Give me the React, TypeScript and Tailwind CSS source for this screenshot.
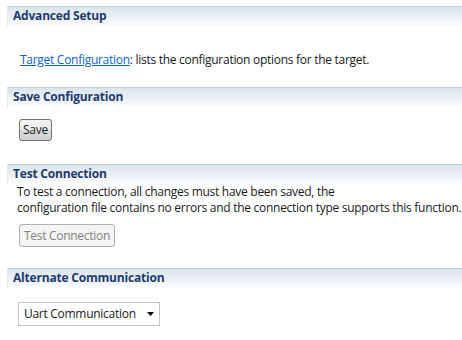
import { ReactNode } from 'react';

function SectionHeader({ children }: { children: ReactNode }) {
  return (
    <div className="ml-[7px] h-[20px] border-t border-l border-t-[#c2cfdd] border-l-[#e3e9f0] bg-[linear-gradient(to_bottom,#dbe4ee,#fbfcfd)] pl-[5px] text-[12px] font-bold leading-[18px] tracking-[-0.2px] text-[#1d3b6c]">
      {children}
    </div>
  );
}

export default function App() {
  return (
    <div className="flex h-[340px] w-[462px] flex-col bg-white pt-[6px] font-['Segoe_UI','Open_Sans',sans-serif] text-[12px] tracking-[-0.28px] text-[#1a1a1a]">
      <SectionHeader>Advanced Setup</SectionHeader>
      <p className="mt-[26px] pl-[20px] leading-[15px]">
        <a className="text-[#0b64c8] underline" href="#">Target Configuration</a>: lists the configuration options for the target.
      </p>

      <div className="mt-[20px]">
        <SectionHeader>Save Configuration</SectionHeader>
      </div>
      <div className="mt-[12px] pl-[19px]">
        <button className="h-[22px] w-[33px] rounded-[3px] border border-[#707070] bg-[linear-gradient(to_bottom,#f2f2f2_0%,#ebebeb_50%,#dddddd_51%,#cfcfcf_100%)] text-[12px] leading-[18px]">
          Save
        </button>
      </div>

      <div className="mt-[23px]">
        <SectionHeader>Test Connection</SectionHeader>
      </div>
      <div className="flex flex-col gap-[0px] whitespace-nowrap pl-[17px] leading-[16px]">
        <p>To test a connection, all changes must have been saved, the</p>
        <p>configuration file contains no errors and the connection type supports this function.</p>
      </div>
      <div className="mt-[8px] pl-[19px]">
        <button
          disabled
          className="h-[23px] w-[96px] rounded-[3px] border border-[#adb2b5] bg-[#f4f4f4] text-[12px] leading-[19px] text-[#838383]"
        >
          Test Connection
        </button>
      </div>

      <div className="mt-[21px]">
        <SectionHeader>Alternate Communication</SectionHeader>
      </div>
      <div className="mt-[14px] pl-[18px]">
        <div className="flex h-[24px] w-[142px] items-center justify-between border border-[#c4c4c4] bg-white pl-[5px] pr-[5px]">
          <span>Uart Communication</span>
          <svg width="7" height="4" viewBox="0 0 7 4">
            <path d="M0 0h7L3.5 4z" fill="#000" />
          </svg>
        </div>
      </div>
    </div>
  );
}
